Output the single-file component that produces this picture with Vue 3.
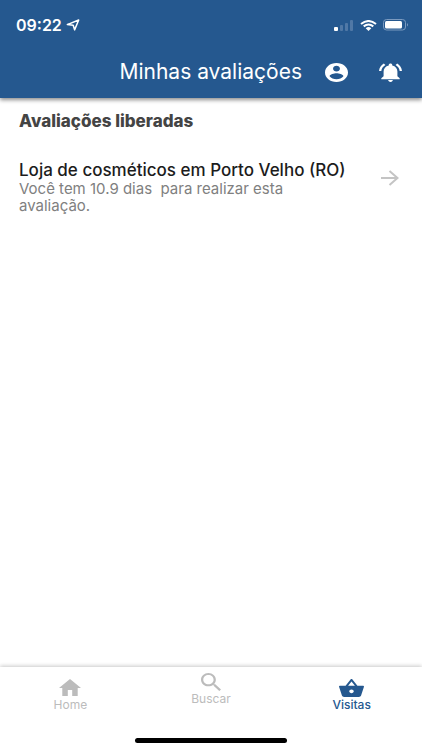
<template>
  <div class="app">
    <header class="header">
      <div class="status-bar">
        <div class="status-left">
          <span>09:22</span>
          <svg class="location" viewBox="0 0 14 12" preserveAspectRatio="none">
            <path d="M1.3 5.6L12.7 1 8.6 10.9 7.2 6.3z" />
          </svg>
        </div>
        <div class="status-right">
          <svg width="20" height="11" viewBox="0 0 20 11">
            <rect x="0" y="7" width="4" height="4" rx="1" fill="#fff" />
            <rect x="6" y="5" width="3" height="6" rx="1" fill="#5078a6" />
            <rect x="11" y="3" width="3" height="8" rx="1" fill="#5078a6" />
            <rect x="16" y="0" width="3" height="11" rx="1" fill="#5078a6" />
          </svg>
          <svg width="17" height="11" viewBox="0 0 17 11" preserveAspectRatio="none">
            <path class="wifi" d="M1 4Q8.500-2 16 4M3.700 6.400Q8.500 2.600 13.300 6.400" />
            <path d="M5.700 8.200Q8.500 6 11.300 8.200L8.500 11z" fill="#fff" />
          </svg>
          <svg width="26" height="12" viewBox="0 0 26 12">
            <rect x=".5" y=".5" width="22" height="10.500" rx="3" fill="none" stroke="#7b9abf" />
            <rect x="2" y="2" width="17" height="7.500" rx="1.500" fill="#fff" />
            <path d="M24 4q2 1.800 0 3.600z" fill="#7b9abf" />
          </svg>
        </div>
      </div>
      <div class="toolbar">
        <h1>Minhas avaliações</h1>
        <button type="button" aria-label="Perfil">
          <svg width="23" height="19" viewBox="2 2 20 20" preserveAspectRatio="none">
            <path :d="icons.account" />
          </svg>
        </button>
        <button type="button" aria-label="Notificações">
          <svg width="23" height="19" viewBox="2 2 20 20" preserveAspectRatio="none">
            <path :d="icons.bell" />
          </svg>
        </button>
      </div>
    </header>

    <main class="content">
      <h2>Avaliações liberadas</h2>
      <a
        v-for="item in reviews"
        :key="item.title"
        class="review"
        href="#"
      >
        <div class="review-text">
          <h3>{{ item.title }}</h3>
          <p>{{ item.text }}</p>
        </div>
        <svg class="arrow" width="19" height="16" viewBox="0 0 19 16">
          <path d="M1 8h16.500M9.500 1l8 7-8 7" />
        </svg>
      </a>
    </main>

    <footer class="footer">
      <nav class="tabs">
        <a
          v-for="tab in tabs"
          :key="tab.label"
          href="#"
          class="tab"
          :class="[tab.icon, { active: current === tab.label }]"
          @click.prevent="current = tab.label"
        >
          <svg :viewBox="tab.box" preserveAspectRatio="none">
            <path :d="icons[tab.icon]" />
          </svg>
          <span>{{ tab.label }}</span>
        </a>
      </nav>
      <div class="home-indicator"></div>
    </footer>
  </div>
</template>

<script setup>
import { ref } from "vue";

const current = ref("Visitas");

const reviews = [
  {
    title: "Loja de cosméticos em Porto Velho (RO)",
    text: "Você tem 10.9 dias  para realizar esta avaliação.",
  },
];

const tabs = [
  { label: "Home", icon: "home", box: "2 3 20 17" },
  { label: "Buscar", icon: "search", box: "3 3 17.5 17.5" },
  { label: "Visitas", icon: "basket", box: "1 2 22 19" },
];

const icons = {
  account:
    "M12 2C6.48 2 2 6.48 2 12s4.48 10 10 10 10-4.48 10-10S17.52 2 12 2zm0 3c1.66 0 3 1.34 3 3s-1.34 3-3 3-3-1.34-3-3 1.34-3 3-3zm0 14.2c-2.5 0-4.71-1.28-6-3.22.03-1.99 4-3.08 6-3.08 1.99 0 5.97 1.09 6 3.08-1.29 1.94-3.5 3.22-6 3.22z",
  bell: "M7.58 4.08L6.15 2.65C3.75 4.48 2.17 7.3 2.03 10.5h2c.15-2.65 1.51-4.97 3.55-6.42zm12.39 6.42h2c-.15-3.2-1.73-6.02-4.12-7.85l-1.42 1.43c2.02 1.45 3.39 3.77 3.54 6.42zM18 11c0-3.07-1.64-5.64-4.5-6.32V4c0-.83-.67-1.5-1.5-1.5s-1.5.67-1.5 1.5v.68C7.63 5.36 6 7.92 6 11v5l-2 2v1h16v-1l-2-2v-5zm-6 11c.14 0 .27-.01.4-.04.65-.14 1.18-.58 1.44-1.18.1-.24.15-.5.15-.78h-4c.01 1.1.9 2 2.01 2z",
  home: "M10 20v-6h4v6h5v-8h3L12 3 2 12h3v8z",
  search:
    "M15.5 14h-.79l-.28-.27C15.41 12.59 16 11.11 16 9.5 16 5.91 13.09 3 9.5 3S3 5.91 3 9.5 5.91 16 9.5 16c1.61 0 3.09-.59 4.23-1.57l.27.28v.79l5 4.99L20.49 19l-4.99-5zm-6 0C7.01 14 5 11.99 5 9.5S7.01 5 9.5 5 14 7.01 14 9.5 11.99 14 9.5 14z",
  basket:
    "M17.21 9l-4.38-6.56c-.19-.28-.51-.42-.83-.42-.32 0-.64.14-.83.43L6.79 9H2c-.55 0-1 .45-1 1 0 .09.01.18.04.27l2.54 9.27c.23.84 1 1.46 1.92 1.46h13c.92 0 1.69-.62 1.93-1.46l2.54-9.27L23 10c0-.55-.45-1-1-1h-4.79zM9 9l3-4.4L15 9H9zm3 8c-1.1 0-2-.9-2-2s.9-2 2-2 2 .9 2 2-.9 2-2 2z",
};
</script>

<style>
body {
  background: #fff;
}
</style>

<style scoped>
.app {
  min-height: 100vh;
  display: flex;
  flex-direction: column;
  font-family: Inter, "Liberation Sans", sans-serif;
}

h1,
h2,
h3,
p {
  margin: 0;
}

svg {
  display: block;
  flex: none;
}

/* HEADER */
.header {
  background: #25588f;
  color: #fff;
  box-shadow: 0 2px 4px rgba(0, 0, 0, 0.45);
}

.status-bar {
  height: 46px;
  padding: 4px 13px 0 16px;
  box-sizing: border-box;
  display: flex;
  align-items: center;
  justify-content: space-between;
}

.status-left {
  display: flex;
  align-items: center;
  gap: 4px;
  font-size: 16px;
  font-weight: 600;
}

.location {
  width: 14px;
  height: 12px;
  fill: none;
  stroke: #fff;
  stroke-width: 1.5;
  stroke-linejoin: round;
}

.status-right {
  display: flex;
  align-items: center;
  gap: 6px;
}

.wifi {
  fill: none;
  stroke: #fff;
  stroke-width: 2;
}

.toolbar {
  height: 52px;
  padding: 0 20px;
  display: flex;
  align-items: center;
  justify-content: flex-end;
  gap: 31px;
}

.toolbar h1 {
  margin-right: -8px;
  font-size: 21px;
  font-weight: 400;
  line-height: 24px;
}

.toolbar button {
  padding: 0;
  border: 0;
  background: none;
  cursor: pointer;
}

.toolbar svg {
  fill: #fff;
}

/* CONTENT */
.content {
  flex: 1;
  padding: 12px 23px 20px 19px;
}

.content h2 {
  color: #444;
  font-size: 17px;
  font-weight: 800;
  line-height: 22px;
}

.review {
  margin-top: 28px;
  display: flex;
  align-items: flex-start;
  justify-content: space-between;
  color: inherit;
  text-decoration: none;
}

.review-text {
  flex: 1;
}

.review h3 {
  color: #1c1c1c;
  font-size: 17px;
  font-weight: 500;
  line-height: 20px;
}

.review p {
  max-width: 300px;
  color: #808080;
  font-size: 15px;
  line-height: 17px;
  white-space: pre-wrap;
}

.arrow {
  margin-top: 10px;
  fill: none;
  stroke: #c4c4c4;
  stroke-width: 2;
}

/* BOTTOM TABS */
.footer {
  background: #fff;
  box-shadow: 0 -1px 4px rgba(0, 0, 0, 0.22);
}

.tabs {
  height: 71px;
  display: grid;
  grid-template-columns: repeat(3, 1fr);
}

.tab {
  padding-top: 12px;
  display: flex;
  flex-direction: column;
  align-items: center;
  gap: 1px;
  color: #bcbcbc;
  font-size: 12px;
  line-height: 14px;
  text-decoration: none;
}

.tab svg {
  width: 22px;
  height: 18px;
  fill: currentColor;
}

.tab.home svg {
  height: 17px;
  margin-bottom: 1px;
}

.tab.search {
  padding-top: 6px;
}

.tab.search svg {
  width: 20px;
}

.tab.basket svg {
  width: 25px;
}

.tab.active {
  color: #25588f;
  font-weight: 500;
}

.home-indicator {
  width: 36%;
  height: 5px;
  margin: 0 auto 7px;
  border-radius: 3px;
  background: #000;
}
</style>
